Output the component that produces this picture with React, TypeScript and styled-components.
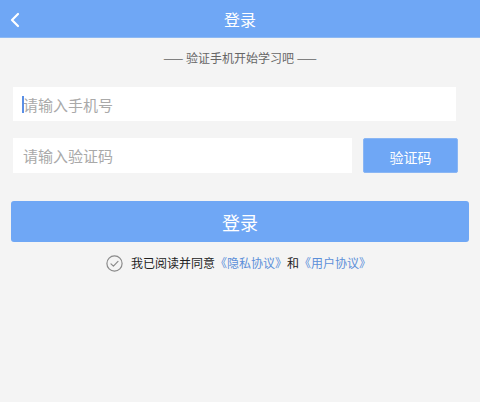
import React, { useState } from "react"
import styled, { createGlobalStyle } from "styled-components"

const GlobalStyle = createGlobalStyle`
  html, body {
    margin: 0;
    padding: 0;
    background: #f4f4f4;
  }
  body {
    font-family: "Noto Sans CJK SC", "Noto Sans", sans-serif;
  }
  * {
    box-sizing: border-box;
  }
`

const BackIcon = () => (
  <svg width="12" height="16" viewBox="0 0 12 16" fill="none">
    <path d="M9 2L3 8l6 6" stroke="#fff" strokeWidth="2.2" strokeLinecap="round" strokeLinejoin="round" />
  </svg>
)

const CheckIcon = () => (
  <svg width="17" height="17" viewBox="0 0 17 17" fill="none">
    <circle cx="8.5" cy="8.5" r="7.6" stroke="#8a8a8a" strokeWidth="1.2" />
    <path d="M5 8.8l2.4 2.4L12 6.4" stroke="#8a8a8a" strokeWidth="1.2" strokeLinecap="round" strokeLinejoin="round" />
  </svg>
)

export default function App() {
  const [phone, setPhone] = useState("")
  const [code, setCode] = useState("")

  return (
    <Page>
      <GlobalStyle />
      <Header>
        <BackButton>
          <BackIcon />
        </BackButton>
        <Title>登录</Title>
        <span />
      </Header>
      <Subtitle>—— 验证手机开始学习吧 ——</Subtitle>
      <Form>
        <PhoneField>
          <PhoneInput placeholder="请输入手机号" value={phone} onChange={(e) => setPhone(e.target.value)} />
          {/* focused caret as it shows in the screenshot */}
          {phone === "" && <Caret />}
        </PhoneField>
        <CodeRow>
          <CodeInput placeholder="请输入验证码" value={code} onChange={(e) => setCode(e.target.value)} />
          <CodeButton>验证码</CodeButton>
        </CodeRow>
      </Form>
      <LoginButton>登录</LoginButton>
      <Agreement>
        <CheckIcon />
        <AgreeText>
          我已阅读并同意<Link>《隐私协议》</Link>和<Link>《用户协议》</Link>
        </AgreeText>
      </Agreement>
    </Page>
  )
}

const Page = styled.div`
  width: 480px;
  height: 402px;
  background: #f4f4f4;
  display: flex;
  flex-direction: column;
`

const Header = styled.header`
  height: 38px;
  background: #6fa7f5;
  display: grid;
  grid-template-columns: 40px 1fr 40px;
  align-items: center;
  border-bottom: 1px solid #8db9f3;
`

const BackButton = styled.div`
  display: flex;
  align-items: center;
  padding-left: 9px;
  padding-top: 2px;
`

const Title = styled.h1`
  margin: 0;
  text-align: center;
  color: #fff;
  font-size: 16px;
  font-weight: 400;
  line-height: 20px;
  padding-top: 1px;
`

const Subtitle = styled.p`
  margin: 10px 0 0;
  text-align: center;
  font-size: 12px;
  line-height: 20px;
  color: #666;
`

const Form = styled.div`
  display: flex;
  flex-direction: column;
  gap: 17px;
  padding: 0 22px 0 13px;
  margin-top: 19px;
`

const BaseInput = styled.input`
  height: 34px;
  border: none;
  outline: none;
  background: #fff;
  font-family: inherit;
  font-size: 15px;
  color: #333;
  padding: 0 0 0 10px;
  caret-color: #4a86e8;

  &::placeholder {
    color: #a9a9a9;
  }
`

const PhoneField = styled.div`
  position: relative;
  width: 443px;
`

const PhoneInput = styled(BaseInput)`
  width: 100%;
  display: block;
`

const Caret = styled.span`
  position: absolute;
  left: 9px;
  top: 9px;
  width: 2px;
  height: 17px;
  background: #5a8fe6;
  pointer-events: none;
`

const CodeRow = styled.div`
  display: flex;
  gap: 11px;
  height: 35px;
`

const CodeInput = styled(BaseInput)`
  width: 339px;
  height: 35px;
`

const CodeButton = styled.button`
  width: 95px;
  height: 35px;
  border: 1px solid #8ab6f4;
  border-radius: 2px;
  background: #6fa7f5;
  color: #fff;
  font-family: inherit;
  font-size: 14px;
  padding: 3px 0 0;
`

const LoginButton = styled.button`
  margin: 28px 11px 0;
  height: 41px;
  border: none;
  border-radius: 3px;
  background: #6fa7f5;
  color: #fff;
  font-family: inherit;
  font-size: 18px;
  padding: 0;
`

const Agreement = styled.div`
  margin-top: 11px;
  height: 20px;
  display: flex;
  align-items: center;
  justify-content: center;
  gap: 8px;
  padding-right: 3px;
`

const AgreeText = styled.span`
  font-size: 12px;
  color: #222;
  line-height: 20px;
`

const Link = styled.span`
  color: #5b8fd9;
`
